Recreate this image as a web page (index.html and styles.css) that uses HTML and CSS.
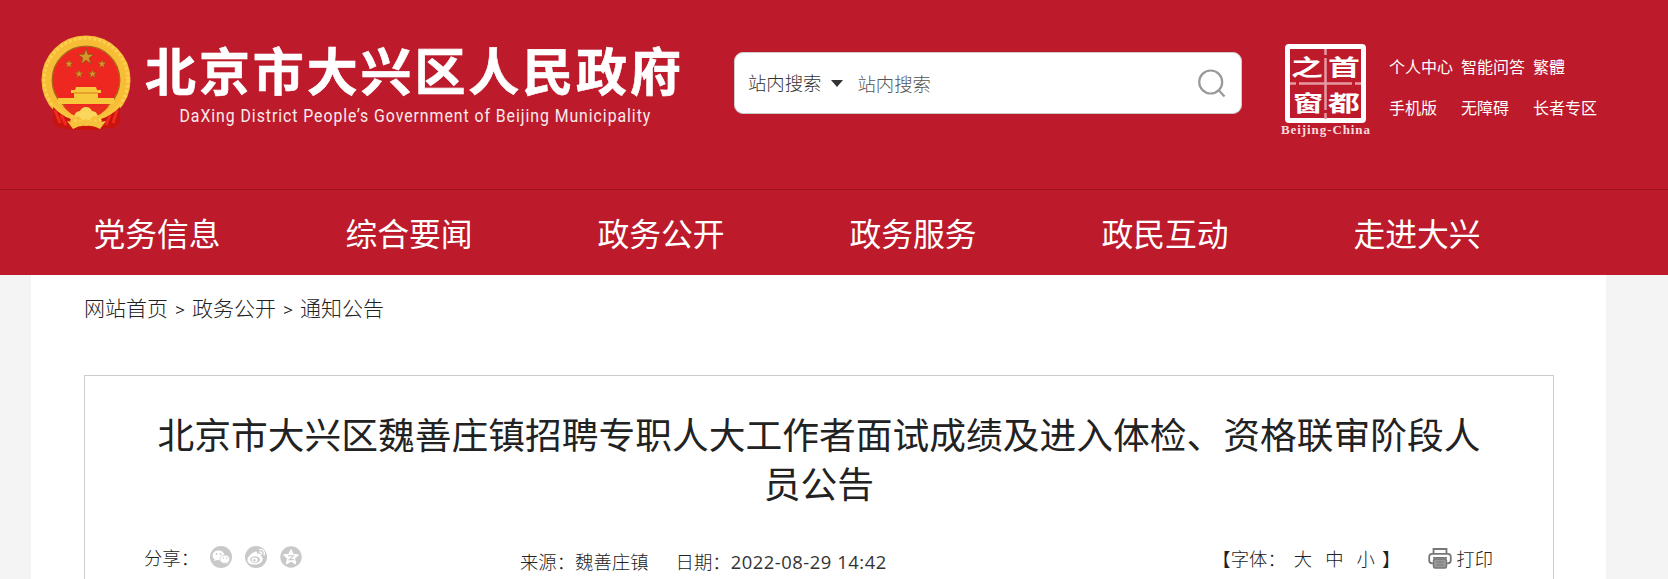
FILE: index.html
```
<!DOCTYPE html>
<html lang="zh-CN">
<head>
    <meta charset="UTF-8">
    <meta name="viewport" content="width=device-width, initial-scale=1.0">
    <title>北京市大兴区人民政府</title>
    <link rel="stylesheet" href="styles.css">
</head>
<body>
    <!-- 头部 -->
    <header class="header">
        <div class="header-top">
            <a class="logo" href="#">
                <svg class="emblem" viewBox="0 0 90 97" width="90" height="97">
                    <defs>
                        <polygon id="star" points="0,-10 2.3,-3.1 9.5,-3.1 3.7,1.2 5.9,8.1 0,3.8 -5.9,8.1 -3.7,1.2 -9.5,-3.1 -2.3,-3.1"/>
                    </defs>
                    <path d="M12 68 L32 76 L57 76 L79 67 L79 88 L73 93 L66 91 L58 95 L31 95 L22 91 L16 92 L12 87 Z" fill="#c8140f"/>
                    <circle cx="45" cy="45" r="39" fill="#ee2720" stroke="#f7bd36" stroke-width="11"/>
                    <circle cx="45" cy="45" r="42" fill="none" stroke="#fdd052" stroke-width="3" stroke-dasharray="3 2"/>
                    <circle cx="45" cy="45" r="33.8" fill="none" stroke="#a8651c" stroke-width="1.3"/>
                    <g fill="#d2962a" stroke="#8a4a14" stroke-width=".8">
                        <use href="#star" transform="translate(45 22) scale(.86)"/>
                        <use href="#star" transform="translate(28 29) scale(.45)"/>
                        <use href="#star" transform="translate(61 29) scale(.45)"/>
                        <use href="#star" transform="translate(38 39) scale(.45)"/>
                        <use href="#star" transform="translate(51.500 39) scale(.45)"/>
                    </g>
                    <path d="M35 52 h20 l1 3 h4 v3 h-3 v5 h16 v6 h-56 v-6 h16 v-5 h-3 v-3 h4 z" fill="#f8c83c"/>
                    <path d="M33 58 h24" stroke="#d98a20" stroke-width="1.200"/>
                    <path d="M22 71 h46 q-8 10 -15 10 h-16 q-7 0 -15 -10" fill="#e9301d"/>
                    <!-- 绶带 -->
                    <path d="M12 70 Q18 80 30 84 L26 94 L16 92 L12 87 Z M79 70 Q72 80 60 84 L64 93 L73 93 L79 87 Z" fill="#c8140f"/>
                    <path d="M14 75 L19 88 M20 80 L25 90 M76 75 L72 88 M69 80 L65 90" stroke="#f02a1c" stroke-width="3" fill="none"/>
                    <path d="M33 82 q1 -6 6 -6 q2 -4 6 -4 q4 0 6 4 q5 0 6 6 q-6 -2 -7 2 q-5 3 -10 0 q-1 -4 -7 -2" fill="#fbd65c"/>
                    <path d="M26 86 q12 3 19 -2 q8 5 20 2 l-6 8 q-8 -4 -14 -3 q-6 -1 -13 3 z" fill="#f6c23b"/>
                    <path d="M12 70 q10 10 20 12 M79 70 q-10 10 -20 12" stroke="#f8c440" stroke-width="3" fill="none"/>
                </svg>
                <svg class="logo-text" viewBox="0 0 550 100" width="550" height="100">
                    <text class="logo-cn" x="3" y="55.500" textLength="536">北京市大兴区人民政府</text>
                    <text class="logo-en" transform="translate(37.500 87) scale(.88 1)" textLength="535">DaXing District People’s Government of Beijing Municipality</text>
                </svg>
            </a>

            <form class="search">
                <span class="search-type">站内搜索</span>
                <span class="search-arrow"></span>
                <input class="search-input" type="text" placeholder="站内搜索">
                <svg class="search-icon" viewBox="0 0 28 29" width="28" height="29">
                    <circle cx="12.700" cy="13" r="11.500"/>
                    <path d="M20.500 21 L26.500 27.500"/>
                </svg>
            </form>

            <!-- 首都之窗 -->
            <svg class="seal" viewBox="0 0 92 96" width="92" height="96">
                <rect x="7.500" y="3.500" width="76" height="74" rx="1.500" fill="none" stroke="#fff" stroke-width="5"/>
                <path class="seal-cross" d="M45.500 6 v6 M45.500 15 v52 M45.500 70 v6 M10 40.500 h6 M19 40.500 h53 M75 40.500 h6"/>
                <text class="seal-char" transform="translate(11 32) scale(1.18 .82)">之</text>
                <text class="seal-char" transform="translate(48 32) scale(1.18 .82)">首</text>
                <text class="seal-char" transform="translate(13 68) scale(1.12 .82)">窗</text>
                <text class="seal-char" transform="translate(48 68) scale(1.18 .82)">都</text>
                <text class="seal-en" x="1" y="91" textLength="89">Beijing-China</text>
            </svg>

            <div class="top-links">
                <a href="#">个人中心</a>
                <a href="#">智能问答</a>
                <a href="#">繁體</a>
                <a href="#">手机版</a>
                <a href="#">无障碍</a>
                <a href="#">长者专区</a>
            </div>
        </div>

        <nav class="nav">
            <a href="#">党务信息</a>
            <a href="#">综合要闻</a>
            <a href="#">政务公开</a>
            <a href="#">政务服务</a>
            <a href="#">政民互动</a>
            <a href="#">走进大兴</a>
        </nav>
    </header>

    <!-- 正文 -->
    <div class="container">
        <div class="crumbs">
            <a href="#">网站首页</a><span>&gt;</span><a href="#">政务公开</a><span>&gt;</span><a href="#">通知公告</a>
        </div>

        <div class="article">
            <h1>北京市大兴区魏善庄镇招聘专职人大工作者面试成绩及进入体检、资格联审阶段人员公告</h1>
            <div class="info">
                <div class="share">
                    <span class="share-label">分享：</span>
                    <svg viewBox="0 0 22 22" width="22" height="22">
                        <circle cx="11" cy="11" r="11" fill="#c9c9c9"/>
                        <path d="M8.500 4.500 c-3.500 0 -6 2.200 -6 4.900 c0 1.600 .8 2.900 2.200 3.800 l-.6 2 l2.300 -1.200 c3 .8 8 -.5 8 -4.600 c0 -2.700 -2.400 -4.900 -5.900 -4.900" fill="#fff"/>
                        <path d="M15 9 c-3 0 -5.200 1.900 -5.200 4.200 c0 2.900 3.300 4.700 6.400 4 l2 1 l-.5 -1.700 c1.300 -.8 2.100 -2 2.100 -3.300 c0 -2.300 -2 -4.200 -4.800 -4.200" fill="#fff" stroke="#c9c9c9" stroke-width=".7"/>
                        <g fill="#c9c9c9"><circle cx="6.500" cy="8" r=".9"/><circle cx="10.500" cy="8" r=".9"/><circle cx="13.400" cy="12" r=".7"/><circle cx="16.800" cy="12" r=".7"/></g>
                    </svg>
                    <svg viewBox="0 0 22 22" width="22" height="22">
                        <circle cx="11" cy="11" r="11" fill="#c9c9c9"/>
                        <path d="M9.500 6 c2 -1 3 0 2.500 2 c3 -1 4.500 0 3.800 2 c4 2 1.500 8.500 -6 8.500 c-8 0 -9.500 -5 -4.500 -9.800 c1.500 -1.500 3 -2.300 4.200 -2.700" fill="#fff"/>
                        <ellipse cx="10" cy="13.600" rx="4.900" ry="3.400" fill="#c9c9c9"/>
                        <ellipse cx="9.600" cy="13.900" rx="3" ry="2.400" fill="#fff"/>
                        <circle cx="9.300" cy="14.200" r="1.200" fill="#c9c9c9"/>
                        <path d="M14.500 3.600 c3.500 -.6 5.600 2 4.700 5.200 M14.500 6 c1.800 -.3 2.800 .8 2.400 2.400" fill="none" stroke="#fff" stroke-width="1.200" stroke-linecap="round"/>
                    </svg>
                    <svg viewBox="0 0 22 22" width="22" height="22">
                        <circle cx="11" cy="11" r="10.700" fill="#c9c9c9"/>
                        <polygon points="11,3.500 13.200,8.300 18.500,8.900 14.600,12.500 15.700,18 11,15.200 6.300,18 7.400,12.500 3.500,8.900 8.800,8.300" fill="#fff" stroke="#fff" stroke-linejoin="round"/>
                        <path d="M8 9.800 h5.500 L9.300 13.600 H14" fill="none" stroke="#c9c9c9" stroke-width="1.100"/>
                    </svg>
                </div>
                <div class="source">
                    <span>来源：魏善庄镇</span>
                    <span>日期：<span class="date">2022-08-29 14:42</span></span>
                </div>
                <div class="tools">
                    <span class="size-label">【字体：</span>
                    <a href="#">大</a>
                    <a href="#">中</a>
                    <a href="#">小</a>
                    <span class="bracket">】</span>
                    <a class="print" href="#">
                        <svg viewBox="0 0 24 22" width="24" height="22">
                            <path d="M5.500 7 V2 h13 v5" fill="#fff" stroke="#777" stroke-width="1.800"/>
                            <rect x="1.200" y="6.800" width="21.600" height="9.500" rx="3" fill="#fff" stroke="#777" stroke-width="1.800"/>
                            <path d="M5 10.800 h14" stroke="#777" stroke-width="1.600"/>
                            <rect x="5.500" y="12" width="13" height="9" rx="1.500" fill="#999" stroke="#777" stroke-width="1.400"/>
                            <path d="M8.500 15 h7 M8.500 18 h7" stroke="#777"/>
                        </svg>
                        <span>打印</span>
                    </a>
                </div>
            </div>
        </div>
    </div>
</body>
</html>
```
FILE: styles.css
```
* {
    box-sizing: border-box;
}
body {
    margin: 0;
    height: 579px;
    overflow: hidden;
    background-color: #f4f4f4;
    font-family: "Noto Sans CJK SC", sans-serif;
    color: #222;
}
a {
    color: inherit;
    text-decoration: none;
}
svg {
    display: block;
    flex: none;
    overflow: visible;
}

/* 头部 */
.header {
    background-color: #bd1a2c;
    color: #fff;
}
.header-top {
    display: flex;
    align-items: flex-start;
    height: 189px;
    padding-left: 41px;
}
.logo {
    display: flex;
    width: 693px;
    padding-top: 35px;
}
.logo-text {
    margin: 0 0 0 11px;
}
.logo-cn {
    font-size: 51px;
    font-weight: 700;
    fill: #fff;
    stroke: #fff;
    stroke-width: .6px;
}
.logo-en {
    font-family: Roboto, sans-serif;
    font-size: 18px;
    fill: #fbeaec;
}
.search {
    display: flex;
    align-items: center;
    width: 508px;
    height: 62px;
    margin-top: 52px;
    padding: 0 15px 0 13px;
    background-color: #fff;
    border: 1px solid #ccc;
    border-radius: 9px;
}
.search-type {
    font-size: 18.375px;
    line-height: 26px;
    margin-bottom: 3px;
    font-weight: 300;
    color: #333;
}
.search-arrow {
    margin: 0 14px 0 10px;
    border: 6.500px solid transparent;
    border-top: 7px solid #333;
    border-bottom: 0;
}
.search-input {
    flex: 1;
    min-width: 0;
    padding: 0;
    border: 0;
    outline: none;
    font-family: inherit;
    font-size: 18.375px;
    font-weight: 300;
}
.search-input::placeholder {
    color: #555;
}
.search-icon {
    fill: none;
    stroke: #999;
    stroke-width: 2.200;
}
.seal {
    margin: 43px 0 0 38px;
}
.seal-cross {
    stroke: #e59aa2;
    stroke-width: 2.500;
}
.seal-char {
    font-size: 27px;
    font-weight: 700;
    fill: #fff;
}
.seal-en {
    font-family: "Liberation Serif", serif;
    font-size: 13px;
    font-weight: 700;
    fill: #f7dcdf;
}
.top-links {
    display: grid;
    grid-template-columns: 72px 72px 72px;
    grid-auto-rows: 41px;
    margin: 46px 0 0 17px;
    line-height: 41px;
    font-size: 16px;
    white-space: nowrap;
}
.nav {
    display: flex;
    height: 86px;
    padding-left: 31px;
    border-top: 1px solid #a01220;
}
.nav a {
    width: 252px;
    line-height: 85px;
    font-size: 31.800px;
    text-align: center;
}

/* 正文 */
.container {
    width: 1575px;
    height: 304px;
    margin-left: 31px;
    padding: 0 52px 0 53px;
    background-color: #fff;
}
.crumbs {
    height: 100px;
    line-height: 65px;
    font-size: 21px;
    font-weight: 300;
}
.crumbs span {
    display: inline-block;
    width: 24px;
    font-family: "Open Sans", sans-serif;
    font-size: 17px;
    font-weight: 400;
    text-align: center;
}
.article {
    height: 230px;
    padding: 33px 59px 0;
    border: 1px solid #ccc;
}
h1 {
    margin: 0;
    padding: 0 10px;
    line-height: 49px;
    font-size: 36.750px;
    font-weight: 400;
    text-align: center;
    color: #222;
}
.info {
    display: flex;
    margin-top: 35px;
    line-height: 30px;
    font-size: 18.375px;
    font-weight: 300;
    white-space: nowrap;
}
.share {
    display: flex;
    align-items: center;
    gap: 13px;
    width: 376px;
    height: 30px;
}
.share-label {
    width: 53px;
}
.source {
    display: flex;
    gap: 27px;
    padding-top: 4px;
}
.date {
    font-family: "Open Sans", sans-serif;
    font-weight: 400;
    letter-spacing: .550px;
    color: #333;
}
.tools {
    display: flex;
    align-items: center;
    height: 32px;
    margin-left: auto;
}
.tools .size-label {
    margin-right: 8px;
}
.tools > a {
    margin-right: 13px;
}
.tools .bracket {
    margin-left: -6px;
}
.tools .print {
    display: flex;
    align-items: center;
    gap: 4px;
    margin: 0 1px 0 28px;
}
```
